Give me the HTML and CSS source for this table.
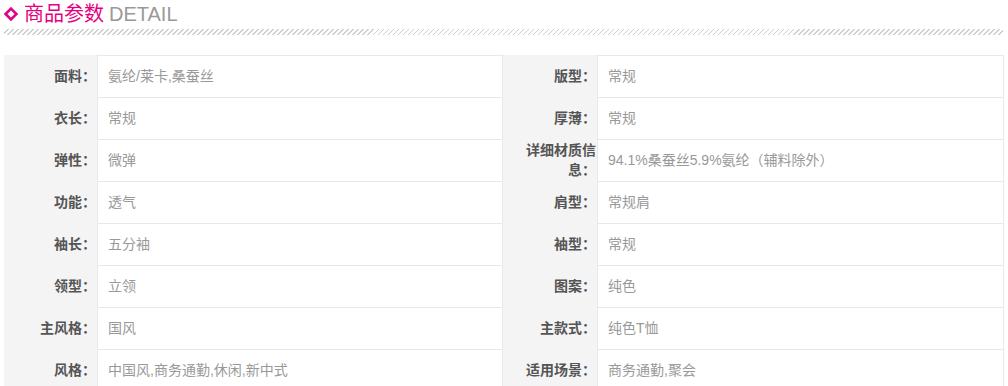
FILE: index.html
```html
<!DOCTYPE html>
<html lang="zh">
<head>
<meta charset="utf-8">
<link rel="stylesheet" href="styles.css">
</head>
<body>
<div class="wrap">
  <div class="title">
    <svg class="dia" width="14" height="14" viewBox="0 0 14 14"><polygon points="7,1.6 12.4,7 7,12.4 1.6,7" fill="none" stroke="#e4007f" stroke-width="2.6"/></svg>
    <span class="cn">商品参数</span><span class="en">DETAIL</span>
  </div>
  <div class="hatch"></div>
  <div class="grid">
    <div class="k">面料：</div><div class="v">氨纶/莱卡,桑蚕丝</div>
    <div class="k">版型：</div><div class="v">常规</div>
    <div class="k">衣长：</div><div class="v">常规</div>
    <div class="k">厚薄：</div><div class="v">常规</div>
    <div class="k">弹性：</div><div class="v">微弹</div>
    <div class="k">详细材质信息：</div><div class="v">94.1%桑蚕丝5.9%氨纶（辅料除外）</div>
    <div class="k">功能：</div><div class="v">透气</div>
    <div class="k">肩型：</div><div class="v">常规肩</div>
    <div class="k">袖长：</div><div class="v">五分袖</div>
    <div class="k">袖型：</div><div class="v">常规</div>
    <div class="k">领型：</div><div class="v">立领</div>
    <div class="k">图案：</div><div class="v">纯色</div>
    <div class="k">主风格：</div><div class="v">国风</div>
    <div class="k">主款式：</div><div class="v">纯色T恤</div>
    <div class="k">风格：</div><div class="v">中国风,商务通勤,休闲,新中式</div>
    <div class="k">适用场景：</div><div class="v">商务通勤,聚会</div>
  </div>
</div>
</body>
</html>
```

FILE: styles.css
```css
html, body {
  margin: 0;
  padding: 0;
  background: #fff;
}
body {
  font-family: "Liberation Sans", "Noto Sans CJK SC", sans-serif;
}
.wrap {
  padding-left: 4px;
  width: 999px;
}
.title {
  display: flex;
  align-items: center;
  height: 28px;
  font-size: 20px;
  line-height: 28px;
}
.dia {
  display: block;
  margin-right: 6px;
}
.cn {
  color: #e4007f;
  margin-right: 5px;
}
.en {
  color: #999;
}
.hatch {
  margin-top: 1px;
  height: 6px;
  background: repeating-linear-gradient(135deg, transparent 0, transparent 2.5px, #cfcfcf 2.5px, #cfcfcf 3.54px);
}
.grid {
  margin-top: 20px;
  display: grid;
  grid-template-columns: 93px 406px 94px 407px;
  grid-auto-rows: 42px;
}
.k {
  background: #f4f4f4;
  color: #555;
  font-weight: bold;
  font-size: 14px;
  line-height: 20px;
  display: flex;
  align-items: center;
  justify-content: flex-end;
  text-align: right;
  padding: 0 1px 0 12px;
}
.v {
  border: 1px solid #e8e8e8;
  border-bottom: none;
  color: #999;
  font-size: 14px;
  line-height: 20px;
  display: flex;
  align-items: center;
  padding: 0 0 1px 10px;
}
```
